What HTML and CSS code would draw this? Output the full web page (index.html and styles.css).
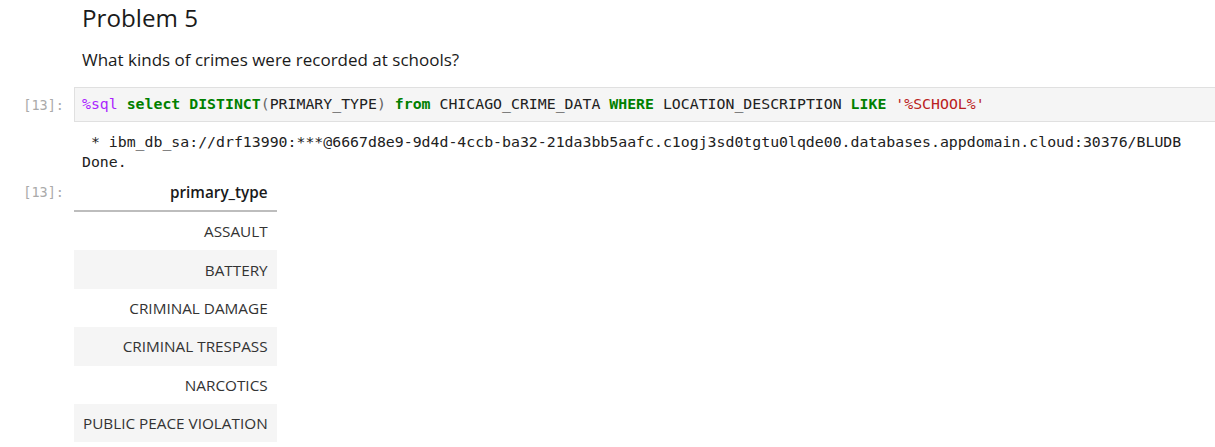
FILE: index.html
```html
<!DOCTYPE html>
<html>
<head>
<meta charset="utf-8">
<link rel="stylesheet" href="styles.css">
</head>
<body>
<div class="notebook">
  <div class="cell md">
    <div class="prompt"></div>
    <div class="md-body">
      <h2 class="title">Problem 5</h2>
      <p class="question">What kinds of crimes were recorded at schools?</p>
    </div>
  </div>
  <div class="cell code">
    <div class="prompt in">[13]:</div>
    <div class="input"><span class="magic">%sql</span> <span class="kw">select</span> <span class="kw">DISTINCT</span><span class="op">(</span>PRIMARY_TYPE<span class="op">)</span> <span class="kw">from</span> CHICAGO_CRIME_DATA <span class="kw">WHERE</span> LOCATION_DESCRIPTION <span class="kw">LIKE</span> <span class="str">'%SCHOOL%'</span></div>
  </div>
  <div class="cell out">
    <div class="prompt"></div>
    <pre class="stdout"> * ibm_db_sa://drf13990:***@6667d8e9-9d4d-4ccb-ba32-21da3bb5aafc.c1ogj3sd0tgtu0lqde00.databases.appdomain.cloud:30376/BLUDB
Done.</pre>
  </div>
  <div class="cell out">
    <div class="prompt outp">[13]:</div>
    <table class="df">
      <thead><tr><th>primary_type</th></tr></thead>
      <tbody>
        <tr><td>ASSAULT</td></tr>
        <tr><td>BATTERY</td></tr>
        <tr><td>CRIMINAL DAMAGE</td></tr>
        <tr><td>CRIMINAL TRESPASS</td></tr>
        <tr><td>NARCOTICS</td></tr>
        <tr><td>PUBLIC PEACE VIOLATION</td></tr>
      </tbody>
    </table>
  </div>
</div>
</body>
</html>
```
FILE: styles.css
```css
html, body {
  margin: 0;
  padding: 0;
  background: #fff;
  overflow: hidden;
}
body {
  font-family: "Open Sans", "Noto Sans", sans-serif;
  color: #212121;
}
.notebook {
  width: 1215px;
  overflow: hidden;
}
.cell {
  display: flex;
  align-items: flex-start;
}
.prompt {
  width: 74px;
  flex: none;
  box-sizing: border-box;
  padding-right: 10px;
  text-align: right;
  font-family: "DejaVu Sans Mono", monospace;
  font-size: 13.5px;
  color: #aaaaaa;
}
.md-body {
  padding-left: 8px;
}
.title {
  margin: 0;
  padding-top: 1px;
  font-weight: 400;
  font-size: 24.2px;
  line-height: 34px;
  color: #1a1a1a;
}
.question {
  margin: 12px 0 0;
  font-size: 17px;
  line-height: 26px;
  color: #1a1a1a;
}
.code {
  margin-top: 14px;
}
.prompt.in {
  line-height: 35px;
  padding-top: 1px;
}
.input {
  flex: 1;
  min-width: 0;
  margin-right: -20px;
  height: 35px;
  box-sizing: border-box;
  border: 1px solid #e0e0e0;
  background: #f5f5f5;
  padding: 0 7px;
  font-family: "DejaVu Sans Mono", monospace;
  font-size: 14.85px;
  line-height: 33px;
  color: #212121;
  white-space: pre;
  overflow: hidden;
}
.magic { color: #aa22ff; }
.kw { color: #008000; font-weight: bold; }
.op { color: #666; }
.str { color: #ba2121; }
.stdout {
  margin: 9px 0 0;
  padding-left: 8px;
  font-family: "DejaVu Sans Mono", monospace;
  font-size: 14.85px;
  line-height: 20px;
  color: #212121;
}
.prompt.outp {
  line-height: 20px;
  padding-top: 10px;
}
.df {
  margin-top: 2px;
  border-collapse: collapse;
  font-size: 15.3px;
  color: #333;
}
.df th, .df td {
  text-align: right;
  padding: 0 9px;
  height: 38.4px;
  line-height: 20px;
}
.df th {
  font-weight: 600;
  color: #1a1a1a;
  height: 36px;
  border-bottom: 2px solid #bdbdbd;
}
.df tbody tr:nth-child(even) {
  background: #f5f5f5;
}
```
